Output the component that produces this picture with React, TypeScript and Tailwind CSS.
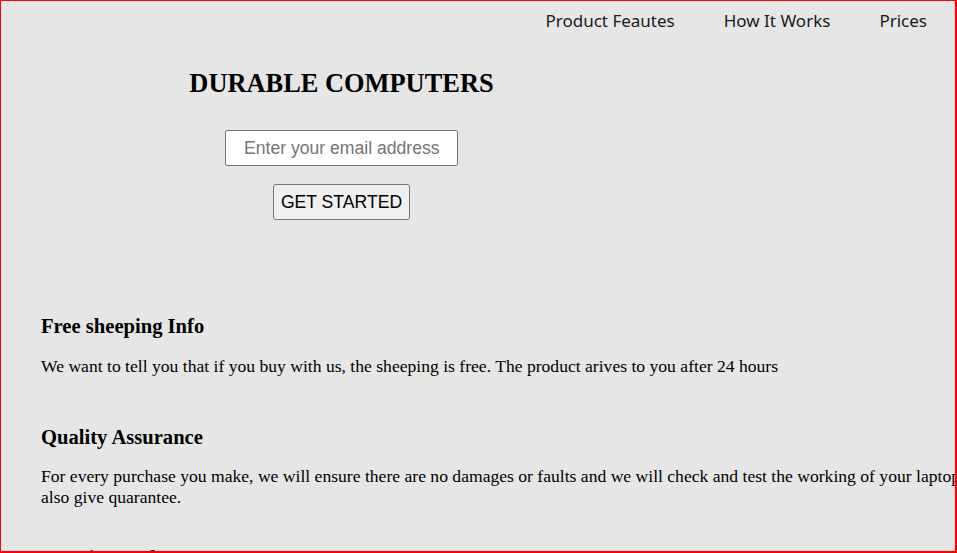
import React from "react";

const serif = { fontFamily: '"Liberation Serif", "Times New Roman", serif' };

export default function App() {
  return (
    <div className="w-[957px] h-[553px] overflow-hidden bg-[#e6e6e6] border-[#ff0000] border-l border-t border-r-2 border-b-2 box-border">
      <nav
        className="flex justify-end gap-[49px] pr-[28px] pt-[8px] text-[17px] leading-[24px] text-[#1a1a1a]"
        style={{ fontFamily: '"Noto Sans", "Open Sans", sans-serif' }}
      >
        <a>Product Feautes</a>
        <a>How It Works</a>
        <a>Prices</a>
      </nav>

      <header className="w-[681px] flex flex-col items-center">
        <h2
          className="mt-[35px] text-[26.4px] leading-[30px] font-bold text-black"
          style={serif}
        >
          DURABLE COMPUTERS
        </h2>
        <input
          type="email"
          placeholder="Enter your email address"
          className="mt-[32px] w-[233px] h-[36px] px-[18px] bg-white border border-[#767676] rounded-[2px] text-[17.6px] placeholder:text-[#757575] outline-none"
          style={{ fontFamily: '"Liberation Sans", Arial, sans-serif' }}
        />
        <button
          className="mt-[18px] w-[137px] h-[36px] bg-[#efefef] border border-[#767676] rounded-[3px] text-[17.6px] text-black"
          style={{ fontFamily: '"Liberation Sans", Arial, sans-serif' }}
        >
          GET STARTED
        </button>
      </header>

      <main className="w-[1040px] pl-[40px] pt-[94px] text-black" style={serif}>
        <section>
          <h3 className="text-[20.6px] leading-[24px] font-bold">Free sheeping Info</h3>
          <p className="mt-[18px] text-[17.6px] leading-[20.2px]">
            We want to tell you that if you buy with us, the sheeping is free. The product arives to you after 24 hours
          </p>
        </section>
        <section className="mt-[49px]">
          <h3 className="text-[20.6px] leading-[24px] font-bold">Quality Assurance</h3>
          <p className="mt-[17px] text-[17.6px] leading-[20.4px]">
            For every purchase you make, we will ensure there are no damages or faults and we will check and test the working of your laptop. We will also give quarantee.
          </p>
        </section>
        <section className="mt-[39px]">
          <h3 className="text-[20.6px] leading-[24px] font-bold">Premium Info</h3>
          <p className="mt-[18px] text-[17.6px] leading-[20.2px]">
            Premium members get priority support and exclusive discounts on all products.
          </p>
        </section>
      </main>
    </div>
  );
}
